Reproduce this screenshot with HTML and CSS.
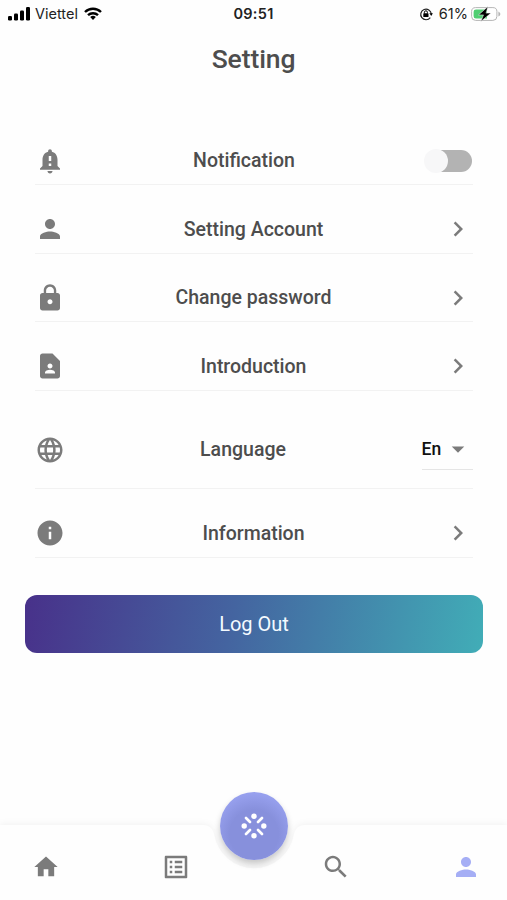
FILE: index.html
```html
<!DOCTYPE html>
<html lang="en">
<head>
  <meta charset="utf-8">
  <title>Setting</title>
  <link rel="stylesheet" href="styles.css">
</head>
<body>
  <div class="status-bar">
    <div class="status-left">
      <svg class="signal" viewBox="0 0 22 14"><rect x="0" y="9" width="4" height="4.500" rx="1.200"/><rect x="6" y="6.500" width="4" height="7" rx="1.200"/><rect x="12" y="3.500" width="4" height="10" rx="1.200"/><rect x="18" y="0" width="4" height="13.500" rx="1.200"/></svg>
      <span class="carrier">Viettel</span>
      <svg class="wifi" viewBox="0 0 18 13"><path d="M1 5a11.500 11.500 0 0 1 16 0M4 8.200a7.200 7.200 0 0 1 10 0" fill="none" stroke="#000" stroke-width="2.400"/><path d="M6.200 10a4.200 4.200 0 0 1 5.600 0L9 12.900z"/></svg>
    </div>
    <div class="time">09:51</div>
    <div class="status-right">
      <svg class="lock-rotation" viewBox="0 0 14 14"><path d="M11.300 10.600A5.300 5.300 0 1 1 12.300 7" fill="none" stroke="#222" stroke-width="1.200"/><path d="M10.400 6.300h3.500L12.200 9z"/><rect x="4.300" y="6.300" width="5.200" height="3.700" rx=".6"/><path d="M5.400 6.500V5.300a1.500 1.500 0 0 1 3 0v1.200" fill="none" stroke="#000"/></svg>
      <span class="percent">61%</span>
      <svg class="battery" viewBox="0 0 30 16"><rect x=".6" y="1.600" width="25.300" height="12.800" rx="4" fill="#fff" stroke="#b5b5b5"/><path d="M5 3.400h11v9.200H5a2.400 2.400 0 0 1-2.400-2.400V5.800A2.400 2.400 0 0 1 5 3.400z" fill="#4fce72"/><path d="M27.400 5.500q2 1 2 2.500t-2 2.500z" fill="#b5b5b5"/><path d="M17 .5L7.500 8.900h5L9.800 15.500 20 7.100h-5z" stroke="#fff" stroke-width=".5"/></svg>
    </div>
  </div>

  <h1 class="title">Setting</h1>

  <div class="settings">
    <div class="row">
      <svg class="icon" viewBox="0 0 24 24"><path d="M12 22c1.100 0 2-.9 2-2h-4c0 1.100.9 2 2 2zm6-6v-5c0-3.070-1.640-5.640-4.500-6.320V4c0-.83-.67-1.500-1.500-1.500s-1.500.67-1.500 1.500v.68C7.630 5.360 6 7.920 6 11v5l-2 2v1h16v-1l-2-2zm-5 0h-2v-2h2v2zm0-4h-2V8h2v4z"/></svg>
      <span class="label">Notification</span>
      <label class="switch">
        <input type="checkbox">
        <span class="slider"></span>
      </label>
    </div>
    <div class="row">
      <svg class="icon" viewBox="0 0 24 24"><path d="M12 12c2.210 0 4-1.790 4-4s-1.790-4-4-4-4 1.790-4 4 1.790 4 4 4zm0 2c-2.670 0-8 1.340-8 4v2h16v-2c0-2.660-5.330-4-8-4z"/></svg>
      <span class="label">Setting Account</span>
      <svg class="icon" viewBox="0 0 24 24"><path d="M10 6L8.590 7.410 13.170 12l-4.580 4.590L10 18l6-6z"/></svg>
    </div>
    <div class="row">
      <svg class="icon" viewBox="0 0 24 24"><path d="M18 8h-1V6c0-2.760-2.240-5-5-5S7 3.240 7 6v2H6c-1.100 0-2 .9-2 2v10c0 1.100.9 2 2 2h12c1.100 0 2-.9 2-2V10c0-1.100-.9-2-2-2zm-6 9c-1.100 0-2-.9-2-2s.9-2 2-2 2 .9 2 2-.9 2-2 2zm3.100-9H8.900V6c0-1.710 1.390-3.100 3.100-3.100s3.100 1.390 3.100 3.100v2z"/></svg>
      <span class="label">Change password</span>
      <svg class="icon" viewBox="0 0 24 24"><path d="M10 6L8.590 7.410 13.170 12l-4.580 4.590L10 18l6-6z"/></svg>
    </div>
    <div class="row">
      <svg class="icon" viewBox="0 0 24 24"><path d="M14 2H6c-1.100 0-2 .9-2 2v16c0 1.100.89 2 2 2h12c1.100 0 2-.9 2-2V8l-6-6zm-2 8c1.100 0 2 .9 2 2s-.9 2-2 2-2-.9-2-2 .9-2 2-2zm4 8H8v-.57c0-.81.48-1.530 1.220-1.850.85-.37 1.790-.58 2.780-.58s1.930.21 2.780.58c.74.32 1.220 1.040 1.220 1.850V18z"/></svg>
      <span class="label">Introduction</span>
      <svg class="icon" viewBox="0 0 24 24"><path d="M10 6L8.590 7.410 13.170 12l-4.580 4.590L10 18l6-6z"/></svg>
    </div>
    <div class="row row-language">
      <svg class="icon" viewBox="0 0 24 24"><path d="M11.990 2C6.470 2 2 6.480 2 12s4.470 10 9.990 10C17.520 22 22 17.520 22 12S17.520 2 11.990 2zm6.930 6h-2.950c-.32-1.250-.78-2.450-1.380-3.560 1.840.63 3.370 1.910 4.330 3.560zM12 4.040c.83 1.200 1.480 2.530 1.910 3.960h-3.820c.43-1.430 1.080-2.760 1.910-3.960zM4.260 14C4.100 13.360 4 12.690 4 12s.1-1.360.26-2h3.380c-.08.66-.14 1.320-.14 2s.06 1.340.14 2H4.260zm.82 2h2.950c.32 1.250.78 2.450 1.380 3.560-1.840-.63-3.370-1.900-4.330-3.560zm2.950-8H5.080c.96-1.660 2.490-2.930 4.330-3.560C8.810 5.550 8.350 6.750 8.030 8zM12 19.960c-.83-1.200-1.480-2.530-1.910-3.960h3.820c-.43 1.430-1.080 2.760-1.910 3.960zM14.340 14H9.660c-.09-.66-.16-1.320-.16-2s.07-1.350.16-2h4.680c.09.65.16 1.320.16 2s-.07 1.340-.16 2zm.25 5.560c.6-1.110 1.060-2.310 1.380-3.560h2.950c-.96 1.650-2.490 2.930-4.330 3.560zM16.360 14c.08-.66.14-1.320.14-2s-.06-1.340-.14-2h3.380c.16.64.26 1.310.26 2s-.1 1.360-.26 2h-3.380z"/></svg>
      <span class="label">Language</span>
      <div class="select">
        <span>En</span>
        <svg class="icon" viewBox="0 0 24 24"><path d="M7 10l5 5 5-5z"/></svg>
      </div>
    </div>
    <div class="row">
      <svg class="icon" viewBox="0 0 24 24"><path d="M12 2C6.480 2 2 6.480 2 12s4.480 10 10 10 10-4.480 10-10S17.520 2 12 2zm1 15h-2v-6h2v6zm0-8h-2V7h2v2z"/></svg>
      <span class="label">Information</span>
      <svg class="icon" viewBox="0 0 24 24"><path d="M10 6L8.590 7.410 13.170 12l-4.580 4.590L10 18l6-6z"/></svg>
    </div>
  </div>

  <button class="logout">Log Out</button>

  <nav class="bottom-nav">
    <svg class="nav-shape" viewBox="0 0 507 90"><path d="M0 15H203Q212 15 214 24A40.500 40.500 0 0 0 294 24Q296 15 305 15H507V100H0z"/></svg>
    <a class="nav-item"><svg class="icon icon-home" viewBox="0 0 24 24"><path d="M10 20v-6h4v6h5v-8h3L12 3 2 12h3v8z"/></svg></a>
    <a class="nav-item"><svg class="icon" viewBox="0 0 24 24"><path d="M19 5v14H5V5h14m1.100-2H3.900c-.5 0-.9.4-.9.9v16.200c0 .4.400.9.900.9h16.200c.4 0 .9-.5.900-.9V3.900c0-.5-.5-.9-.9-.9zM11 7h6v2h-6V7zm0 4h6v2h-6v-2zm0 4h6v2h-6zM7 7h2v2H7zm0 4h2v2H7zm0 4h2v2H7z"/></svg></a>
    <a class="nav-item"><svg class="icon" viewBox="0 0 24 24"><path d="M15.500 14h-.79l-.28-.27C15.410 12.590 16 11.110 16 9.500 16 5.910 13.090 3 9.500 3S3 5.910 3 9.500 5.910 16 9.500 16c1.610 0 3.090-.59 4.230-1.570l.27.28v.79l5 4.990L20.490 19l-4.990-5zm-6 0C7.010 14 5 11.990 5 9.500S7.010 5 9.500 5 14 7.010 14 9.500 11.990 14 9.500 14z"/></svg></a>
    <a class="nav-item active"><svg class="icon" viewBox="0 0 24 24"><path d="M12 12c2.210 0 4-1.790 4-4s-1.790-4-4-4-4 1.790-4 4 1.790 4 4 4zm0 2c-2.670 0-8 1.340-8 4v2h16v-2c0-2.660-5.330-4-8-4z"/></svg></a>
    <button class="fab">
      <svg viewBox="0 0 26 26"><circle cx="13" cy="3.200" r="2.700"/><circle cx="22.800" cy="13" r="2.700"/><circle cx="13" cy="22.800" r="2.700"/><circle cx="3.200" cy="13" r="2.700"/><path d="M5 5l4 4M21 5l-4 4M5 21l4-4M21 21l-4-4" stroke="#fff" stroke-width="2.600" stroke-linecap="round"/></svg>
    </button>
  </nav>
</body>
</html>
```
FILE: styles.css
```css
:root {
  --background: #fefefe;
  --text: #4d4d4d;
  --icon: #7b7b7b;
  --border: #f2f2f2;
  --accent: #a5aef5;
}

* {
  box-sizing: border-box;
}

body {
  display: flex;
  flex-direction: column;
  height: 900px;
  margin: 0;
  overflow: hidden;
  font-family: Roboto, sans-serif;
  background: var(--background);
  color: var(--text);
}

.status-bar {
  display: grid;
  grid-template-columns: 1fr auto 1fr;
  align-items: center;
  height: 27px;
  padding: 0 6px 0 8px;
  font-family: Inter, sans-serif;
  font-size: 14.5px;
  color: #222;
}

.status-left,
.status-right {
  display: flex;
  align-items: center;
}

.status-right {
  justify-content: flex-end;
}

.signal {
  width: 22px;
  height: 14px;
}

.carrier {
  margin: 0 6px 0 5px;
}

.wifi {
  width: 18px;
  height: 13px;
}

.time {
  position: relative;
  left: -1px;
  font-weight: 600;
  letter-spacing: 0.3px;
}

.lock-rotation {
  width: 14px;
  height: 14px;
}

.percent {
  margin: 0 3px 0 6px;
}

.battery {
  width: 30px;
  height: 16px;
}

.title {
  margin: 16px 0 0;
  font-size: 26.5px;
  font-weight: 500;
  line-height: 32px;
  letter-spacing: -0.1px;
  text-align: center;
}

.settings {
  padding: 41.5px 34.5px 0;
}

.row {
  display: flex;
  align-items: center;
  height: 48.5px;
  padding-top: 1px;
  margin-top: 20px;
  border-bottom: 1px solid var(--border);
}

.row-language {
  height: 78.5px;
}

.icon {
  flex: none;
  width: 30px;
  height: 30px;
  fill: var(--icon);
}

.label {
  flex: 1;
  font-size: 19.5px;
  font-weight: 500;
  text-align: center;
}

.switch {
  display: flex;
  width: 49px;
  height: 24px;
}

.switch input {
  display: none;
}

.slider {
  display: flex;
  align-items: center;
  width: 48px;
  height: 22px;
  margin: 1px;
  border-radius: 12px;
  background: #b3b3b3;
}

.slider:before {
  content: "";
  width: 24px;
  height: 24px;
  margin-left: -1px;
  border-radius: 50%;
  background: #f7f7f8;
}

.select {
  display: flex;
  align-items: center;
  justify-content: space-between;
  width: 51px;
  height: 40px;
  border-bottom: 1px solid #e5e5e5;
  font-size: 17.5px;
  font-weight: 500;
  color: #111;
}

.logout {
  height: 58px;
  margin: 37.5px 24px 0 25px;
  border: 0;
  border-radius: 12px;
  background: linear-gradient(100deg, #48318a, #4464a0 45%, #41adb7);
  color: #f4faff;
  font: 400 20px Roboto, sans-serif;
}

.bottom-nav {
  position: relative;
  display: flex;
  align-items: center;
  justify-content: space-between;
  height: 90px;
  margin-top: auto;
  padding: 24px 26px 0 31px;
}

.nav-shape {
  position: absolute;
  left: 0;
  top: 0;
  width: 507px;
  height: 90px;
  overflow: visible;
  fill: #fefefe;
  filter: drop-shadow(0 -1px 3px rgba(0, 0, 0, 0.05));
}

.nav-item {
  position: relative;
  display: flex;
  justify-content: center;
  width: 30px;
}

.nav-item:nth-of-type(2) {
  margin-right: 29px;
}

.icon-home {
  width: 28px;
  height: 30px;
}

.nav-item.active .icon {
  fill: var(--accent);
}

.fab {
  position: absolute;
  left: 220px;
  top: -18px;
  display: flex;
  align-items: center;
  justify-content: center;
  width: 68px;
  height: 68px;
  padding: 0;
  border: 0;
  border-radius: 50%;
  background: radial-gradient(circle at 50% 62%, #8790dc 45%, #97a0ee 75%);
  box-shadow: 0 4px 6px rgba(0, 0, 0, 0.22);
}

.fab svg {
  width: 26px;
  height: 26px;
  fill: #fff;
}
```
